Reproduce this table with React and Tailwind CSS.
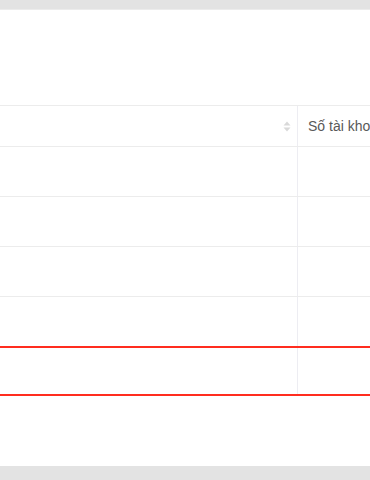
import React from "react";

function SortIcon() {
  return (
    <svg width="8" height="11" viewBox="0 0 8 11" className="shrink-0">
      <path d="M4 0.5 L7.5 4.5 H0.5 Z" fill="#d9d9d9" />
      <path d="M4 10.5 L7.5 6.5 H0.5 Z" fill="#d9d9d9" />
    </svg>
  );
}

export default function App() {
  const rows = [0, 1, 2, 3];
  return (
    <div className="w-[370px] h-[480px] bg-[#e3e3e3] overflow-hidden flex flex-col" style={{ fontFamily: '"Liberation Sans", Arial, sans-serif' }}>
      <div className="h-[9px] shrink-0" />
      <div className="h-[457px] shrink-0 bg-white border-t border-[#ececec] flex flex-col">
        <div className="h-[95px] shrink-0" />
        <div className="flex flex-col w-[420px]">
          <div className="flex h-[42px] border-t border-b border-[#ececec]">
            <div className="w-[297px] shrink-0 flex items-center justify-end pr-[6px]">
              <SortIcon />
            </div>
            <div className="w-px bg-[#ededf2] shrink-0" />
            <div className="flex-1 flex items-center pl-[10px] text-[14px] text-[#595959] whitespace-nowrap">Số tài khoản</div>
          </div>
          {rows.map((r) => (
            <div key={r} className="flex h-[50px] border-b border-[#ececec]">
              <div className="w-[297px] shrink-0" />
              <div className="w-px bg-[#ededf2] shrink-0" />
              <div className="flex-1" />
            </div>
          ))}
          <div className="flex h-[50px] border-t-2 border-b-2 border-[#ff2d1f] -mt-px">
            <div className="w-[297px] shrink-0" />
            <div className="w-px bg-[#ededf2] shrink-0" />
            <div className="flex-1" />
          </div>
        </div>
      </div>
    </div>
  );
}
